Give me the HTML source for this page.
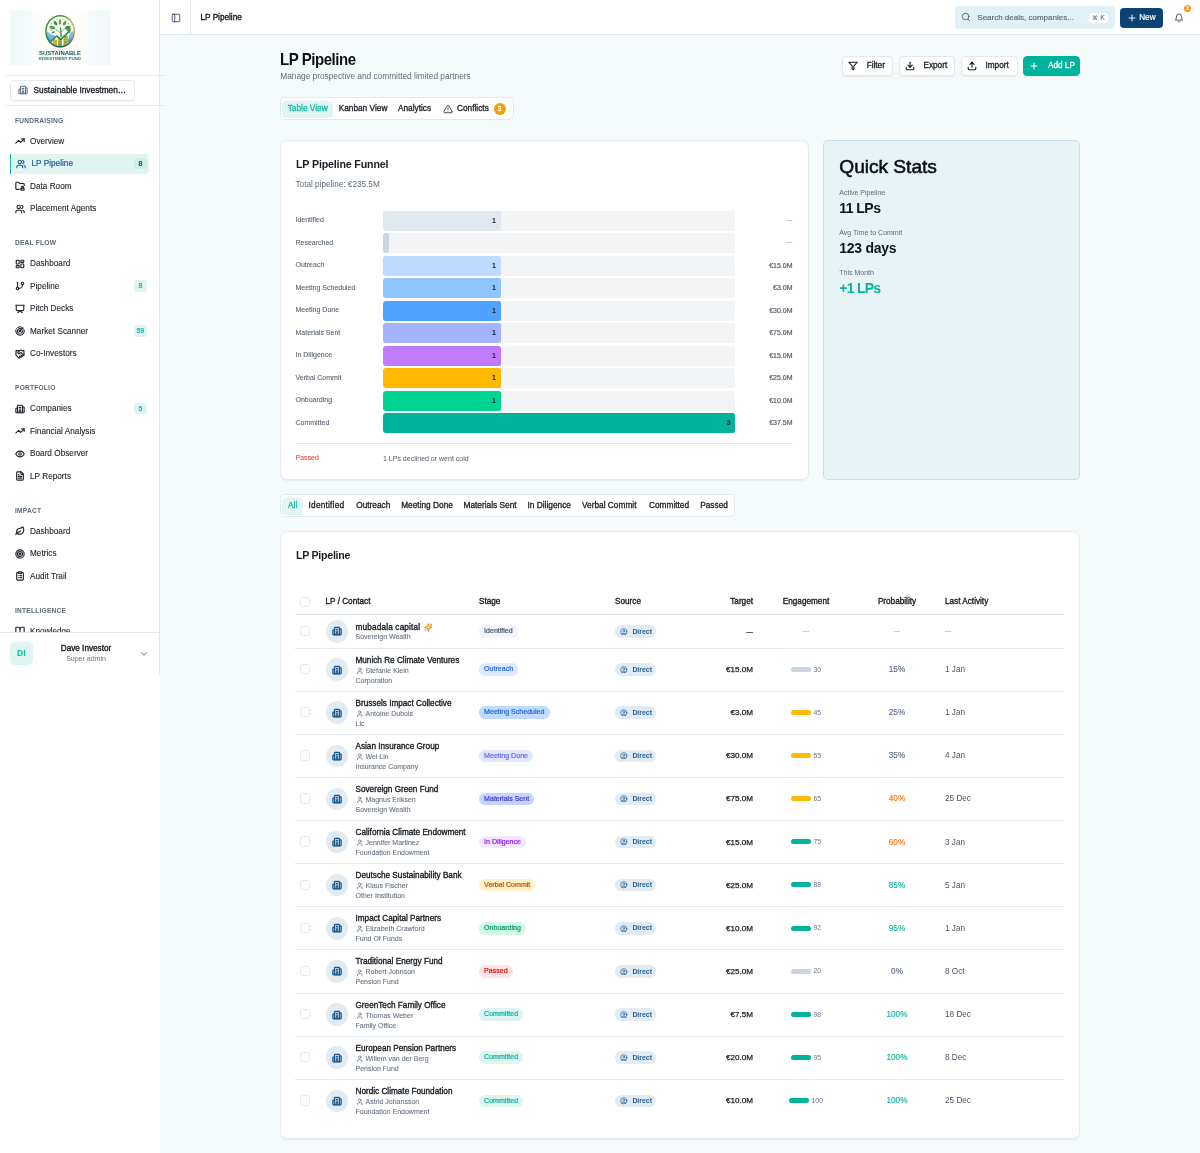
<!DOCTYPE html>
<html lang="en"><head><meta charset="utf-8"><title>LP Pipeline</title>
<style>
*{box-sizing:border-box;margin:0;padding:0}
html,body{width:1200px;height:1153px;overflow:hidden;background:#fff}
body{will-change:transform;font-family:"Liberation Sans",sans-serif;color:#1a1d23;font-size:8.2px;position:relative;-webkit-font-smoothing:antialiased}
.ic{display:inline-block;flex:none}
a{text-decoration:none;color:inherit}
/* sidebar */
.sb{position:absolute;left:0;top:0;width:160px;height:675px;background:#fff;border-right:1px solid #e2e8f0;overflow:hidden}
.logo{position:absolute;left:10px;top:10px}
.sbline{position:absolute;left:5px;width:159.5px;height:1px;background:#e6ebf2;z-index:5}
.org{position:absolute;left:10px;top:80.1px;width:125px;height:20.5px;border:1px solid #e2e8f0;border-radius:4px;background:#fff;display:flex;align-items:center;padding-left:7px;box-shadow:0 1px 1px rgba(0,0,0,.03)}
.org span{margin-left:5.5px;font-size:8.3px;color:#15181d;letter-spacing:.02px;-webkit-text-stroke:.3px #15181d}
.nav{position:absolute;left:0;top:0;width:159px;height:631.7px;overflow:hidden}
.glabel{position:absolute;left:15px;font-size:6.6px;line-height:12px;font-weight:700;letter-spacing:.23px;color:#5d6879}
.item{position:absolute;left:10px;width:139px;height:20px;display:flex;align-items:center;padding-left:5px;border-radius:4px;color:#1f242c}
.item .t{margin-left:5px;font-size:8.2px;letter-spacing:.02px;-webkit-text-stroke:.12px currentColor}
.item.act{background:#e0f5f2;border-left:1.5px solid #14b8a6;padding-left:5px;color:#1e5f96;border-radius:0 4px 4px 0}
.item.act .t{margin-left:5.5px;-webkit-text-stroke:.2px #1e5f96}
.nb{position:absolute;right:2.4px;top:4px;width:12.5px;height:11.8px;border-radius:3px;background:#e0f5f2;color:#14b8a6;font-size:7px;line-height:12px;text-align:center;font-weight:400;-webkit-text-stroke:.25px currentColor}
.nb.nba{background:#cdeee9;color:#334155}
.sbfoot{position:absolute;left:0;top:631.7px;width:159px;height:43.3px;border-top:1px solid #e2e8f0;background:#fff}
.av{position:absolute;left:10px;top:9.5px;width:22.5px;height:22.5px;border-radius:5px;background:#dff5f2;color:#14b8a6;font-size:8.6px;font-weight:700;line-height:22.5px;text-align:center}
.un{position:absolute;left:40px;width:92px;top:10.5px;text-align:center;font-size:8.2px;line-height:11px;color:#15181d;-webkit-text-stroke:.35px #15181d}
.ur{position:absolute;left:40px;width:92px;top:21.8px;text-align:center;font-size:7px;line-height:10px;color:#64748b}
/* header */
.hd{position:absolute;left:160px;top:0;width:1040px;height:35px;background:#fff;border-bottom:1px solid #e2e8f0}
.hsep{position:absolute;left:30px;top:0;width:1px;height:34px;background:#e2e8f0}
.htitle{position:absolute;left:40.5px;top:12px;font-size:8.2px;line-height:12px;color:#15181d;-webkit-text-stroke:.35px #15181d}
.search{position:absolute;left:795px;top:6px;width:160px;height:22.5px;border-radius:4px;background:#e0f0f6}
.search .ph{position:absolute;left:22.3px;top:5.8px;font-size:8px;line-height:12px;color:#566474;-webkit-text-stroke:.12px #566474}
.kbd{position:absolute;left:134px;top:6.6px;width:19px;height:10px;border-radius:2.5px;background:#fff;font-size:7px;line-height:10px;text-align:center;color:#475569}
.newbtn{position:absolute;left:960px;top:7.7px;width:42.500px;height:20px;border-radius:4px;background:#0b4375;color:#fff}
.newbtn span{position:absolute;left:19.2px;top:4.4px;font-size:8.2px;line-height:12px;-webkit-text-stroke:.2px #fff}
.bellb{position:absolute;left:1024px;top:5.200px;width:7px;height:7px;border-radius:50%;background:#f59e0b;color:#fff;font-size:5px;line-height:7px;text-align:center;font-weight:700}
/* main */
.main{position:absolute;left:160px;top:35px;width:1040px;height:1118px;background:#f5fbfb}
.ptitle{position:absolute;left:120px;top:16px;font-size:15px;line-height:18px;font-weight:700;letter-spacing:-.45px;color:#0c0f13;transform:scaleY(1.1);transform-origin:0 14.3px}
.psub{position:absolute;left:120.300px;top:36px;font-size:8.3px;line-height:11px;color:#5f6b7a}
.btn{position:absolute;top:21px;height:20px;border-radius:4px;background:#fff;border:1px solid #e2e8f0;box-shadow:0 1px 1.5px rgba(0,0,0,.05);color:#1a1d23}
.btn .ic{position:absolute;left:5.3px;top:4.2px}
.btn span{position:absolute;left:24px;top:3.2px;font-size:8.2px;line-height:12px;-webkit-text-stroke:.3px currentColor}
.btn.prim{background:#00b39b;border-color:#00b39b;color:#fff}
.tabs{position:absolute;height:23px;border:1px solid #e2e8f0;border-radius:5px;background:#fff}
.tab{position:absolute;top:2.5px;height:17px;border-radius:3.5px;font-size:8.3px;line-height:15.8px;text-align:center;color:#1a1d23;white-space:nowrap;-webkit-text-stroke:.3px currentColor}
.tab.on{background:#e0f5f2;color:#14b8a6}
.cb{position:absolute;left:56.5px;top:2.2px;width:12px;height:12px;border-radius:50%;background:#f59e0b;color:#fff;font-size:6.5px;line-height:12px;text-align:center}
.card{position:absolute;background:#fff;border:1px solid #e5eaf0;border-radius:7.5px;box-shadow:0 1px 2px rgba(15,23,42,.06)}
.ctitle{position:absolute;left:15px;top:15.3px;font-size:10.7px;line-height:16px;color:#1a1d23;font-weight:700;letter-spacing:-.17px}
.csub{position:absolute;left:14.5px;top:37.5px;font-size:8.2px;line-height:12px;color:#5f6b7a}
.frow{position:absolute;left:14.5px;width:497px;height:20px}
.fl{position:absolute;left:0;top:3.6px;font-size:7px;line-height:11px;color:#566170;white-space:nowrap;-webkit-text-stroke:.08px currentColor}
.ftrack{position:absolute;left:87.5px;top:0;width:352px;height:20px;border-radius:2.5px;background:#f3f4f6;overflow:hidden}
.ffill{position:absolute;left:0;top:0;height:20px;border-radius:2.5px;text-align:right;padding-right:5px;font-size:7px;line-height:20px;font-weight:700;color:#1a1d23}
.fv{position:absolute;right:0;top:3.8px;font-size:7px;line-height:11px;color:#4b5563;-webkit-text-stroke:.15px #4b5563}
.fv.dash{color:#94a3b8;-webkit-text-stroke:0}
.fsep{position:absolute;left:14.5px;width:497px;top:301.8px;height:1px;background:#e2e8f0}
.fpass{position:absolute;left:14.5px;top:307px;width:497px;height:20px}
.fnote{position:absolute;left:87.5px;top:4.5px;font-size:7px;line-height:11px;color:#4f5966}
.fpass .fl{top:4.2px}
.qs{position:absolute;background:#e8f3f6;border:1px solid #cbdfe8;border-radius:5px}
.qtitle{position:absolute;left:15.300px;top:13.6px;font-size:19.2px;line-height:24px;font-weight:400;letter-spacing:-.05px;color:#0c0f13;-webkit-text-stroke:.55px #0c0f13}
.ql{position:absolute;left:15.300px;font-size:7px;line-height:10px;color:#5f6b7a}
.qv{position:absolute;left:15.300px;font-size:14px;line-height:20px;font-weight:700;letter-spacing:-.4px;color:#111418}
.qv.teal{color:#0cb39c}
.thead{position:absolute;left:14px;top:56.3px;width:769px;height:27px;border-bottom:1px solid #e2e8f0}
.th{position:absolute;top:7.9px;font-size:8.2px;line-height:12px;color:#15181d;white-space:nowrap;-webkit-text-stroke:.32px #15181d}
.th.r{text-align:right}.th.c{text-align:center}
.cbx{position:absolute;left:4.8px;width:10.4px;height:10.4px;border:1px solid #e3e9f0;border-radius:2.8px;background:#fff}
.tr{position:absolute;left:14px;width:769px;border-bottom:1px solid #e4e9f1}
.tr:last-child{border-bottom:0}
.lpav{position:absolute;left:30.5px;width:22.5px;height:22.5px;border-radius:50%;background:#e2ebf2;display:flex;align-items:center;justify-content:center}
.nm{position:absolute;left:60.5px;font-size:8.2px;line-height:11px;color:#15181d;white-space:nowrap;-webkit-text-stroke:.32px #15181d}
.ct,.ty{position:absolute;left:60.5px;font-size:7px;line-height:10px;color:#657081;white-space:nowrap;-webkit-text-stroke:.08px currentColor}
.sbadge{position:absolute;left:184px;height:12.5px;border-radius:6.25px;padding:0 5.1px;font-size:7.05px;line-height:12.5px;white-space:nowrap;-webkit-text-stroke:.2px currentColor}
.dbadge{position:absolute;left:320px;width:41px;height:12.5px;border-radius:6.25px;background:#e2ebf2;color:#1e5f96}
.dbadge .ic{position:absolute;left:5px;top:2.5px}
.dbadge span{position:absolute;left:17.4px;top:.4px;font-size:6.900px;line-height:12.5px;font-weight:700}
.tg{position:absolute;left:398px;width:60px;text-align:right;font-size:8.1px;line-height:11px;color:#1a1d23;-webkit-text-stroke:.25px #1a1d23}
.dash{position:absolute;text-align:center;font-size:6.4px;line-height:10px;color:#94a3b8}
.eg{position:absolute;left:466px;width:90px;height:10px;display:flex;align-items:center;justify-content:center}
.eg i{display:block;width:20px;height:5px;border-radius:2.5px;position:relative;top:.6px}
.eg b{font-weight:400;font-size:6.8px;line-height:10px;color:#64748b;margin-left:2.5px;position:relative;top:.8px}
.pb{position:absolute;left:557px;width:90px;text-align:center;font-size:8.2px;line-height:11px;-webkit-text-stroke:.15px currentColor}
.la{position:absolute;left:650px;font-size:8.2px;line-height:11px;color:#4b5563}

</style></head>
<body>
<aside class="sb">
<svg class="logo" width="100" height="55" viewBox="0 0 100 55">
<defs>
<linearGradient id="lgbg" x1="0" x2="1" y1="0" y2="0"><stop offset="0" stop-color="#f3f8fb"/><stop offset="0.2" stop-color="#f4f9fb"/><stop offset="0.235" stop-color="#fdfdfb"/><stop offset="0.765" stop-color="#fdfdfb"/><stop offset="0.8" stop-color="#f4f9fb"/><stop offset="1" stop-color="#f3f8fb"/></linearGradient>
<linearGradient id="lgring" x1="0" x2="1" y1="0.3" y2="0.7"><stop offset="0" stop-color="#2c8a3c"/><stop offset="0.5" stop-color="#5a9c3a"/><stop offset="0.72" stop-color="#c9aa3a"/><stop offset="1" stop-color="#d4ad3c"/></linearGradient>
<linearGradient id="lgring2" x1="0" x2="0" y1="0" y2="1"><stop offset="0.5" stop-color="#1c6a62" stop-opacity="0"/><stop offset="0.95" stop-color="#1c6a62"/></linearGradient>
<linearGradient id="lgblue" x1="0" x2="0" y1="0" y2="1"><stop offset="0" stop-color="#a9d8ee"/><stop offset="1" stop-color="#2f8fd0"/></linearGradient>
<clipPath id="lgclip"><ellipse cx="50.1" cy="21.2" rx="13.700" ry="15"/></clipPath>
</defs>
<rect width="100" height="55" fill="url(#lgbg)"/>
<g clip-path="url(#lgclip)">
<rect x="35" y="5" width="31" height="33" fill="#fcfefc"/>
<path d="M35 18.5 C37 21.5 40 24.5 46.500 26.200 L41.300 31 L36.500 35 L35 35Z" fill="url(#lgblue)"/>
<path d="M65.500 17.500 C64 20 62.500 21.500 60.500 22.500 L59 27 L57.500 31.500 L60 35 L65.500 35Z" fill="url(#lgblue)"/>
<rect x="43" y="29.500" width="4.200" height="6" rx="1" fill="#c9b03a"/><rect x="48" y="28.300" width="4" height="8" rx="0.800" fill="#8c9a36"/><rect x="53.500" y="25.500" width="4.200" height="10" rx="0.800" fill="#a3a038"/>
<rect x="48" y="30.300" width="4" height="0.700" fill="#d8c86a"/><rect x="53.500" y="28" width="4.200" height="0.700" fill="#d8c86a"/><rect x="53.500" y="30.500" width="4.200" height="0.700" fill="#d8c86a"/><rect x="48" y="32.500" width="4" height="0.700" fill="#d8c86a"/>
<path d="M39.500 33 L46.700 26 L50.800 29.400 L59.200 21.300" fill="none" stroke="#2f8a3c" stroke-width="1.500" stroke-linejoin="miter"/>
</g>
<path d="M56.300 19.800 L61.300 18.300 L59.800 23.400Z" fill="#3f9a3c"/>
<path d="M50.300 27.300 C50.500 24 50.300 21 49.800 17.500 L51 17.200 C51.500 20.500 51.800 23.500 51.800 26.800Z" fill="#3f8a3c"/>
<path d="M50.300 23 C49 21.500 47.500 20.500 45.500 19.800" fill="none" stroke="#4a9440" stroke-width="0.700"/>
<path d="M51 22.500 C52 20.500 53.500 19.300 55 18.500" fill="none" stroke="#4a9440" stroke-width="0.700"/>
<ellipse cx="42.300" cy="17.600" rx="3.100" ry="1.700" transform="rotate(18 42.300 17.600)" fill="#5aa845"/>
<ellipse cx="57.800" cy="17.600" rx="3" ry="1.700" transform="rotate(-18 57.800 17.600)" fill="#3a8a4a"/>
<ellipse cx="45.450" cy="13.100" rx="2.700" ry="1.500" transform="rotate(55 45.450 13.100)" fill="#3f8f42"/>
<ellipse cx="54.650" cy="13.100" rx="2.600" ry="1.400" transform="rotate(-55 54.650 13.100)" fill="#55a343"/>
<ellipse cx="50" cy="11.900" rx="1.300" ry="3" fill="#5fae48"/>
<ellipse cx="43.400" cy="22.300" rx="1.700" ry="0.900" transform="rotate(-25 43.400 22.300)" fill="#3f8f42"/>
<circle cx="41.500" cy="13.800" r="0.700" fill="#5fae48"/><circle cx="46.700" cy="9.800" r="0.600" fill="#6ab550"/><circle cx="53" cy="10" r="0.600" fill="#6ab550"/><circle cx="58.200" cy="13.800" r="0.700" fill="#6ab550"/><circle cx="41" cy="20.300" r="0.600" fill="#3f8f42"/>
<ellipse cx="50.100" cy="21.200" rx="14.200" ry="15.500" fill="none" stroke="url(#lgring)" stroke-width="1.400"/>
<ellipse cx="50.100" cy="21.200" rx="14.200" ry="15.500" fill="none" stroke="url(#lgring2)" stroke-width="1.400"/>
<text x="50" y="45" text-anchor="middle" font-family="'Liberation Sans',sans-serif" font-weight="700" font-size="6" textLength="42" lengthAdjust="spacingAndGlyphs" fill="#1b5563">SUSTAINABLE</text>
<text x="50" y="49.600" text-anchor="middle" font-family="'Liberation Sans',sans-serif" font-weight="700" font-size="3.800" textLength="42" lengthAdjust="spacingAndGlyphs" fill="#2d7a5c">INVESTMENT FUND</text>
</svg>
<div class="org"><svg class="ic" width="10" height="10" viewBox="0 0 24 24" fill="none" stroke="#64748b" stroke-width="2.7" stroke-linecap="round" stroke-linejoin="round" style=""><path d="M10 12h4"/><path d="M10 8h4"/><path d="M14 21v-3a2 2 0 0 0-4 0v3"/><path d="M6 10H4a2 2 0 0 0-2 2v7a2 2 0 0 0 2 2h16a2 2 0 0 0 2-2V9a2 2 0 0 0-2-2h-2"/><path d="M6 21V5a2 2 0 0 1 2-2h8a2 2 0 0 1 2 2v16"/></svg><span>Sustainable Investmen…</span></div><nav class="nav"><div class="glabel" style="top:114.70px">FUNDRAISING</div>
<a class="item" style="top:131.10px"><svg class="ic" width="10" height="10" viewBox="0 0 24 24" fill="none" stroke="currentColor" stroke-width="2.7" stroke-linecap="round" stroke-linejoin="round" style=""><polyline points="22 7 13.5 15.5 8.5 10.5 2 17"/><polyline points="16 7 22 7 22 13"/></svg><span class="t">Overview</span></a>
<a class="item act" style="top:153.60px"><svg class="ic" width="10" height="10" viewBox="0 0 24 24" fill="none" stroke="currentColor" stroke-width="2.7" stroke-linecap="round" stroke-linejoin="round" style=""><path d="M16 21v-2a4 4 0 0 0-4-4H6a4 4 0 0 0-4 4v2"/><circle cx="9" cy="7" r="4"/><path d="M22 21v-2a4 4 0 0 0-3-3.87"/><path d="M16 3.13a4 4 0 0 1 0 7.75"/></svg><span class="t">LP Pipeline</span><span class="nb nba">8</span></a>
<a class="item" style="top:176.10px"><svg class="ic" width="10" height="10" viewBox="0 0 24 24" fill="none" stroke="currentColor" stroke-width="2.7" stroke-linecap="round" stroke-linejoin="round" style=""><rect width="8" height="5" x="14" y="17" rx="1"/><path d="M10 20H4a2 2 0 0 1-2-2V5a2 2 0 0 1 2-2h3.9a2 2 0 0 1 1.69.9l.81 1.2a2 2 0 0 0 1.67.9H20a2 2 0 0 1 2 2v2.5"/><path d="M20 17v-2a2 2 0 1 0-4 0v2"/></svg><span class="t">Data Room</span></a>
<a class="item" style="top:198.60px"><svg class="ic" width="10" height="10" viewBox="0 0 24 24" fill="none" stroke="currentColor" stroke-width="2.7" stroke-linecap="round" stroke-linejoin="round" style=""><path d="M16 21v-2a4 4 0 0 0-4-4H6a4 4 0 0 0-4 4v2"/><circle cx="9" cy="7" r="4"/><path d="M22 21v-2a4 4 0 0 0-3-3.87"/><path d="M16 3.13a4 4 0 0 1 0 7.75"/></svg><span class="t">Placement Agents</span></a>
<div class="glabel" style="top:237.30px">DEAL FLOW</div>
<a class="item" style="top:253.70px"><svg class="ic" width="10" height="10" viewBox="0 0 24 24" fill="none" stroke="currentColor" stroke-width="2.7" stroke-linecap="round" stroke-linejoin="round" style=""><rect width="7" height="9" x="3" y="3" rx="1"/><rect width="7" height="5" x="14" y="3" rx="1"/><rect width="7" height="9" x="14" y="12" rx="1"/><rect width="7" height="5" x="3" y="16" rx="1"/></svg><span class="t">Dashboard</span></a>
<a class="item" style="top:276.20px"><svg class="ic" width="10" height="10" viewBox="0 0 24 24" fill="none" stroke="currentColor" stroke-width="2.7" stroke-linecap="round" stroke-linejoin="round" style=""><line x1="6" x2="6" y1="3" y2="15"/><circle cx="18" cy="6" r="3"/><circle cx="6" cy="18" r="3"/><path d="M18 9a9 9 0 0 1-9 9"/></svg><span class="t">Pipeline</span><span class="nb">8</span></a>
<a class="item" style="top:298.70px"><svg class="ic" width="10" height="10" viewBox="0 0 24 24" fill="none" stroke="currentColor" stroke-width="2.7" stroke-linecap="round" stroke-linejoin="round" style=""><path d="M2 3h20"/><path d="M21 3v11a2 2 0 0 1-2 2H5a2 2 0 0 1-2-2V3"/><path d="m7 21 5-5 5 5"/></svg><span class="t">Pitch Decks</span></a>
<a class="item" style="top:321.20px"><svg class="ic" width="10" height="10" viewBox="0 0 24 24" fill="none" stroke="currentColor" stroke-width="2.7" stroke-linecap="round" stroke-linejoin="round" style=""><path d="M19.07 4.93A10 10 0 0 0 6.99 3.34"/><path d="M4 6h.01"/><path d="M2.29 9.62A10 10 0 1 0 21.31 8.35"/><path d="M16.24 7.76A6 6 0 1 0 8.23 16.67"/><path d="M12 18h.01"/><path d="M17.99 11.66A6 6 0 0 1 15.77 16.67"/><circle cx="12" cy="12" r="2"/><path d="m13.41 10.59 5.66-5.66"/></svg><span class="t">Market Scanner</span><span class="nb">59</span></a>
<a class="item" style="top:343.70px"><svg class="ic" width="10" height="10" viewBox="0 0 24 24" fill="none" stroke="currentColor" stroke-width="2.7" stroke-linecap="round" stroke-linejoin="round" style=""><path d="m11 17 2 2a1 1 0 1 0 3-3"/><path d="m14 14 2.5 2.5a1 1 0 1 0 3-3l-3.88-3.88a3 3 0 0 0-4.24 0l-.88.88a1 1 0 1 1-3-3l2.81-2.81a5.79 5.79 0 0 1 7.06-.87l.47.28a2 2 0 0 0 1.42.25L21 4"/><path d="m21 3 1 11h-2"/><path d="M3 3 2 14l6.5 6.5a1 1 0 1 0 3-3"/><path d="M3 4h8"/></svg><span class="t">Co-Investors</span></a>
<div class="glabel" style="top:382.30px">PORTFOLIO</div>
<a class="item" style="top:398.70px"><svg class="ic" width="10" height="10" viewBox="0 0 24 24" fill="none" stroke="currentColor" stroke-width="2.7" stroke-linecap="round" stroke-linejoin="round" style=""><path d="M10 12h4"/><path d="M10 8h4"/><path d="M14 21v-3a2 2 0 0 0-4 0v3"/><path d="M6 10H4a2 2 0 0 0-2 2v7a2 2 0 0 0 2 2h16a2 2 0 0 0 2-2V9a2 2 0 0 0-2-2h-2"/><path d="M6 21V5a2 2 0 0 1 2-2h8a2 2 0 0 1 2 2v16"/></svg><span class="t">Companies</span><span class="nb">5</span></a>
<a class="item" style="top:421.20px"><svg class="ic" width="10" height="10" viewBox="0 0 24 24" fill="none" stroke="currentColor" stroke-width="2.7" stroke-linecap="round" stroke-linejoin="round" style=""><polyline points="22 7 13.5 15.5 8.5 10.5 2 17"/><polyline points="16 7 22 7 22 13"/></svg><span class="t">Financial Analysis</span></a>
<a class="item" style="top:443.70px"><svg class="ic" width="10" height="10" viewBox="0 0 24 24" fill="none" stroke="currentColor" stroke-width="2.7" stroke-linecap="round" stroke-linejoin="round" style=""><path d="M2.062 12.348a1 1 0 0 1 0-.696 10.75 10.75 0 0 1 19.876 0 1 1 0 0 1 0 .696 10.75 10.75 0 0 1-19.876 0"/><circle cx="12" cy="12" r="3"/></svg><span class="t">Board Observer</span></a>
<a class="item" style="top:466.20px"><svg class="ic" width="10" height="10" viewBox="0 0 24 24" fill="none" stroke="currentColor" stroke-width="2.7" stroke-linecap="round" stroke-linejoin="round" style=""><path d="M15 2H6a2 2 0 0 0-2 2v16a2 2 0 0 0 2 2h12a2 2 0 0 0 2-2V7Z"/><path d="M14 2v4a2 2 0 0 0 2 2h4"/><path d="M10 9H8"/><path d="M16 13H8"/><path d="M16 17H8"/></svg><span class="t">LP Reports</span></a>
<div class="glabel" style="top:504.80px">IMPACT</div>
<a class="item" style="top:521.20px"><svg class="ic" width="10" height="10" viewBox="0 0 24 24" fill="none" stroke="currentColor" stroke-width="2.7" stroke-linecap="round" stroke-linejoin="round" style=""><path d="M11 20A7 7 0 0 1 9.8 6.1C15.5 5 17 4.48 19 2c1 2 2 4.18 2 8 0 5.5-4.78 10-10 10Z"/><path d="M2 21c0-3 1.85-5.36 5.08-6C9.5 14.52 12 13 13 12"/></svg><span class="t">Dashboard</span></a>
<a class="item" style="top:543.70px"><svg class="ic" width="10" height="10" viewBox="0 0 24 24" fill="none" stroke="currentColor" stroke-width="2.7" stroke-linecap="round" stroke-linejoin="round" style=""><circle cx="12" cy="12" r="10"/><circle cx="12" cy="12" r="6"/><circle cx="12" cy="12" r="2"/></svg><span class="t">Metrics</span></a>
<a class="item" style="top:566.20px"><svg class="ic" width="10" height="10" viewBox="0 0 24 24" fill="none" stroke="currentColor" stroke-width="2.7" stroke-linecap="round" stroke-linejoin="round" style=""><rect width="8" height="4" x="8" y="2" rx="1" ry="1"/><path d="M16 4h2a2 2 0 0 1 2 2v14a2 2 0 0 1-2 2H6a2 2 0 0 1-2-2V6a2 2 0 0 1 2-2h2"/><path d="M12 11h4"/><path d="M12 16h4"/><path d="M8 11h.01"/><path d="M8 16h.01"/></svg><span class="t">Audit Trail</span></a>
<div class="glabel" style="top:604.80px">INTELLIGENCE</div>
<a class="item" style="top:621.20px"><svg class="ic" width="10" height="10" viewBox="0 0 24 24" fill="none" stroke="currentColor" stroke-width="2.7" stroke-linecap="round" stroke-linejoin="round" style=""><path d="M12 7v14"/><path d="M3 18a1 1 0 0 1-1-1V4a1 1 0 0 1 1-1h5a4 4 0 0 1 4 4 4 4 0 0 1 4-4h5a1 1 0 0 1 1 1v13a1 1 0 0 1-1 1h-6a3 3 0 0 0-3 3 3 3 0 0 0-3-3z"/></svg><span class="t">Knowledge</span></a>
</nav><div class="sbfoot"><div class="av">DI</div><div class="un">Dave Investor</div><div class="ur">Super admin</div><svg class="ic" width="10" height="10" viewBox="0 0 24 24" fill="none" stroke="#475569" stroke-width="2" stroke-linecap="round" stroke-linejoin="round" style="position:absolute;left:139px;top:16px"><path d="m6 9 6 6 6-6"/></svg></div></aside>
<div class="sbline" style="top:75px"></div><div class="sbline" style="top:105.3px"></div>
<header class="hd"><svg class="ic" width="10" height="10" viewBox="0 0 24 24" fill="none" stroke="#475569" stroke-width="2.3" stroke-linecap="round" stroke-linejoin="round" style="position:absolute;left:11px;top:12.8px"><rect width="18" height="18" x="3" y="3" rx="2"/><path d="M9 3v18"/></svg><div class="hsep"></div><div class="htitle">LP Pipeline</div><div class="search"><svg class="ic" width="10" height="10" viewBox="0 0 24 24" fill="none" stroke="#475569" stroke-width="2" stroke-linecap="round" stroke-linejoin="round" style="position:absolute;left:6px;top:6.4px"><circle cx="11" cy="11" r="8"/><path d="m21 21-4.3-4.3"/></svg><span class="ph">Search deals, companies...</span><span class="kbd"><span style="font-size:6px">⌘</span> K</span></div><div class="newbtn"><svg class="ic" width="10" height="10" viewBox="0 0 24 24" fill="none" stroke="#fff" stroke-width="2.3" stroke-linecap="round" stroke-linejoin="round" style="position:absolute;left:6.5px;top:5.3px"><path d="M5 12h14"/><path d="M12 5v14"/></svg><span>New</span></div><svg class="ic" width="10" height="10" viewBox="0 0 24 24" fill="none" stroke="#334155" stroke-width="2" stroke-linecap="round" stroke-linejoin="round" style="position:absolute;left:1014px;top:12.5px"><path d="M6 8a6 6 0 0 1 12 0c0 7 3 9 3 9H3s3-2 3-9"/><path d="M10.3 21a1.94 1.94 0 0 0 3.4 0"/></svg><div class="bellb">3</div></header>
<main class="main"><h1 class="ptitle">LP Pipeline</h1><p class="psub">Manage prospective and committed limited partners</p><div class="btn" style="left:681.7px;width:51px"><svg class="ic" width="10" height="10" viewBox="0 0 24 24" fill="none" stroke="currentColor" stroke-width="2.7" stroke-linecap="round" stroke-linejoin="round" style=""><polygon points="22 3 2 3 10 12.46 10 19 14 21 14 12.46 22 3"/></svg><span>Filter</span></div><div class="btn" style="left:738.5px;width:56.2px"><svg class="ic" width="10" height="10" viewBox="0 0 24 24" fill="none" stroke="currentColor" stroke-width="2.7" stroke-linecap="round" stroke-linejoin="round" style=""><path d="M21 15v4a2 2 0 0 1-2 2H5a2 2 0 0 1-2-2v-4"/><polyline points="7 10 12 15 17 10"/><line x1="12" x2="12" y1="15" y2="3"/></svg><span>Export</span></div><div class="btn" style="left:800.5px;width:57.2px"><svg class="ic" width="10" height="10" viewBox="0 0 24 24" fill="none" stroke="currentColor" stroke-width="2.7" stroke-linecap="round" stroke-linejoin="round" style=""><path d="M21 15v4a2 2 0 0 1-2 2H5a2 2 0 0 1-2-2v-4"/><polyline points="17 8 12 3 7 8"/><line x1="12" x2="12" y1="3" y2="15"/></svg><span>Import</span></div><div class="btn prim" style="left:863px;width:57px"><svg class="ic" width="10" height="10" viewBox="0 0 24 24" fill="none" stroke="currentColor" stroke-width="2.7" stroke-linecap="round" stroke-linejoin="round" style=""><path d="M5 12h14"/><path d="M12 5v14"/></svg><span>Add LP</span></div><div class="tabs" style="left:120px;top:62px;width:233.5px"><span class="tab on" style="left:1px;width:51.4px">Table View</span><span class="tab" style="left:53px;width:58px">Kanban View</span><span class="tab" style="left:111px;width:45px">Analytics</span><span class="tab" style="left:156px;width:75px;text-align:left"><svg class="ic" width="10" height="10" viewBox="0 0 24 24" fill="none" stroke="#1e293b" stroke-width="2" stroke-linecap="round" stroke-linejoin="round" style="position:absolute;left:5.7px;top:3.6px"><path d="m21.73 18-8-14a2 2 0 0 0-3.48 0l-8 14A2 2 0 0 0 4 21h16a2 2 0 0 0 1.73-3"/><path d="M12 9v4"/><path d="M12 17h.01"/></svg><span style="position:absolute;left:20px">Conflicts</span><span class="cb">3</span></span></div><section class="card" style="left:120px;top:105px;width:528.5px;height:339.6px"><div class="ctitle">LP Pipeline Funnel</div><div class="csub">Total pipeline: €235.5M</div><div class="frow" style="top:69.8px"><span class="fl">Identified</span><span class="ftrack"><span class="ffill" style="width:117.9px;background:#e2e8f0">1</span></span><span class="fv dash">—</span></div>
<div class="frow" style="top:92.3px"><span class="fl">Researched</span><span class="ftrack"><span class="ffill" style="width:5.6px;background:#cad5e2"></span></span><span class="fv dash">—</span></div>
<div class="frow" style="top:114.8px"><span class="fl">Outreach</span><span class="ftrack"><span class="ffill" style="width:117.9px;background:#bedbff">1</span></span><span class="fv">€15.0M</span></div>
<div class="frow" style="top:137.3px"><span class="fl">Meeting Scheduled</span><span class="ftrack"><span class="ffill" style="width:117.9px;background:#8ec5ff">1</span></span><span class="fv">€3.0M</span></div>
<div class="frow" style="top:159.8px"><span class="fl">Meeting Done</span><span class="ftrack"><span class="ffill" style="width:117.9px;background:#51a2ff">1</span></span><span class="fv">€30.0M</span></div>
<div class="frow" style="top:182.3px"><span class="fl">Materials Sent</span><span class="ftrack"><span class="ffill" style="width:117.9px;background:#a3b3ff">1</span></span><span class="fv">€75.0M</span></div>
<div class="frow" style="top:204.8px"><span class="fl">In Diligence</span><span class="ftrack"><span class="ffill" style="width:117.9px;background:#c27aff">1</span></span><span class="fv">€15.0M</span></div>
<div class="frow" style="top:227.3px"><span class="fl">Verbal Commit</span><span class="ftrack"><span class="ffill" style="width:117.9px;background:#ffb900">1</span></span><span class="fv">€25.0M</span></div>
<div class="frow" style="top:249.8px"><span class="fl">Onboarding</span><span class="ftrack"><span class="ffill" style="width:117.9px;background:#00d492">1</span></span><span class="fv">€10.0M</span></div>
<div class="frow" style="top:272.3px"><span class="fl">Committed</span><span class="ftrack"><span class="ffill" style="width:352.6px;background:#00b39b">3</span></span><span class="fv">€37.5M</span></div>
<div class="fsep"></div><div class="fpass"><span class="fl" style="color:#ef4444">Passed</span><span class="fnote">1 LPs declined or went cold</span></div></section><section class="qs" style="left:663px;top:105px;width:257px;height:339.6px"><div class="qtitle">Quick Stats</div><div class="ql" style="top:47px">Active Pipeline</div><div class="qv" style="top:57px;letter-spacing:-0.55px">11 LPs</div><div class="ql" style="top:87px">Avg Time to Commit</div><div class="qv" style="top:97px;letter-spacing:-0.28px">123 days</div><div class="ql" style="top:127px">This Month</div><div class="qv teal" style="top:137px;letter-spacing:-0.74px">+1 LPs</div></section><div class="tabs" style="left:120px;top:459px;width:455px"><span class="tab on" style="left:1.1px;width:21.1px">All</span><span class="tab" style="left:21.9px;width:47.1px;letter-spacing:.21px">Identified</span><span class="tab" style="left:69.5px;width:45.5px">Outreach</span><span class="tab" style="left:115.1px;width:61.9px">Meeting Done</span><span class="tab" style="left:177.1px;width:63.9px">Materials Sent</span><span class="tab" style="left:241.1px;width:54.3px">In Diligence</span><span class="tab" style="left:295.1px;width:66.3px">Verbal Commit</span><span class="tab" style="left:361.5px;width:53.1px">Committed</span><span class="tab" style="left:414.3px;width:37.5px">Passed</span></div><section class="card" style="left:120px;top:496.2px;width:800px;height:607.6px"><div class="ctitle" style="letter-spacing:-.3px;top:14.8px">LP Pipeline</div><div class="thead"><span class="cbx" style="top:8.2px"></span><span class="th" style="left:30.5px">LP / Contact</span><span class="th" style="left:184px">Stage</span><span class="th" style="left:320px">Source</span><span class="th r" style="left:398px;width:60px">Target</span><span class="th c" style="left:466px;width:90px">Engagement</span><span class="th c" style="left:557px;width:90px">Probability</span><span class="th" style="left:650px">Last Activity</span></div><div class="tr" style="top:83.200px;height:33.125px"><span class="cbx" style="top:10.46px"></span><span class="lpav" style="top:4.81px"><svg class="ic" width="10" height="10" viewBox="0 0 24 24" fill="none" stroke="#17568f" stroke-width="3" stroke-linecap="round" stroke-linejoin="round" style=""><path d="M10 12h4"/><path d="M10 8h4"/><path d="M14 21v-3a2 2 0 0 0-4 0v3"/><path d="M6 10H4a2 2 0 0 0-2 2v7a2 2 0 0 0 2 2h16a2 2 0 0 0 2-2V9a2 2 0 0 0-2-2h-2"/><path d="M6 21V5a2 2 0 0 1 2-2h8a2 2 0 0 1 2 2v16"/></svg></span><span class="nm" style="top:6.46px;letter-spacing:.18px">mubadala capital<svg class="ic" width="8.75" height="8.75" viewBox="0 0 24 24" fill="none" stroke="#f8981d" stroke-width="3" stroke-linecap="round" stroke-linejoin="round" style="margin-left:3.4px;vertical-align:-1.9px"><path d="M9.937 15.5A2 2 0 0 0 8.5 14.063l-6.135-1.582a.5.5 0 0 1 0-.962L8.5 9.936A2 2 0 0 0 9.937 8.5l1.582-6.135a.5.5 0 0 1 .963 0L14.063 8.5A2 2 0 0 0 15.5 9.937l6.135 1.581a.5.5 0 0 1 0 .964L15.5 14.063a2 2 0 0 0-1.437 1.437l-1.582 6.135a.5.5 0 0 1-.963 0z"/><path d="M20 3v4"/><path d="M22 5h-4"/><path d="M4 17v2"/><path d="M5 18H3"/></svg></span><span class="ty" style="top:17.06px">Sovereign Wealth</span><span class="sbadge" style="top:9.81px;background:#f1f5f9;color:#45556c">Identified</span><span class="dbadge" style="top:9.81px"><svg class="ic" width="7.5" height="7.5" viewBox="0 0 24 24" fill="none" stroke="#1e5f96" stroke-width="2.2" stroke-linecap="round" stroke-linejoin="round" style=""><circle cx="12" cy="12" r="10"/><circle cx="12" cy="10" r="3"/><path d="M7 20.662V19a2 2 0 0 1 2-2h6a2 2 0 0 1 2 2v1.662"/></svg><span>Direct</span></span><span class="tg" style="top:10.56px;font-size:6.4px;color:#374151">—</span><span class="dash" style="left:466px;width:90px;top:11.06px">—</span><span class="dash" style="left:557px;width:90px;top:11.06px">—</span><span class="dash" style="left:650px;text-align:left;top:11.06px">—</span></div>
<div class="tr" style="top:116.325px;height:43.125px"><span class="cbx" style="top:15.46px"></span><span class="lpav" style="top:9.81px"><svg class="ic" width="10" height="10" viewBox="0 0 24 24" fill="none" stroke="#17568f" stroke-width="3" stroke-linecap="round" stroke-linejoin="round" style=""><path d="M10 12h4"/><path d="M10 8h4"/><path d="M14 21v-3a2 2 0 0 0-4 0v3"/><path d="M6 10H4a2 2 0 0 0-2 2v7a2 2 0 0 0 2 2h16a2 2 0 0 0 2-2V9a2 2 0 0 0-2-2h-2"/><path d="M6 21V5a2 2 0 0 1 2-2h8a2 2 0 0 1 2 2v16"/></svg></span><span class="nm" style="top:6.06px">Munich Re Climate Ventures</span><span class="ct" style="top:17.06px"><svg class="ic" width="7.5" height="7.5" viewBox="0 0 24 24" fill="none" stroke="#64748b" stroke-width="2.4" stroke-linecap="round" stroke-linejoin="round" style="vertical-align:-1.6px;margin-right:2.5px"><path d="M19 21v-2a4 4 0 0 0-4-4H9a4 4 0 0 0-4 4v2"/><circle cx="12" cy="7" r="4"/></svg>Stefanie Klein</span><span class="ty" style="top:27.06px">Corporation</span><span class="sbadge" style="top:14.81px;background:#dbeafe;color:#2563eb">Outreach</span><span class="dbadge" style="top:14.81px"><svg class="ic" width="7.5" height="7.5" viewBox="0 0 24 24" fill="none" stroke="#1e5f96" stroke-width="2.2" stroke-linecap="round" stroke-linejoin="round" style=""><circle cx="12" cy="12" r="10"/><circle cx="12" cy="10" r="3"/><path d="M7 20.662V19a2 2 0 0 1 2-2h6a2 2 0 0 1 2 2v1.662"/></svg><span>Direct</span></span><span class="tg" style="top:15.56px">€15.0M</span><span class="eg" style="top:15.26px"><i style="background:#cad5e2"></i><b>30</b></span><span class="pb" style="top:15.56px;color:#5d6e8c">15%</span><span class="la" style="top:15.56px">1 Jan</span></div>
<div class="tr" style="top:159.450px;height:43.125px"><span class="cbx" style="top:15.46px"></span><span class="lpav" style="top:9.81px"><svg class="ic" width="10" height="10" viewBox="0 0 24 24" fill="none" stroke="#17568f" stroke-width="3" stroke-linecap="round" stroke-linejoin="round" style=""><path d="M10 12h4"/><path d="M10 8h4"/><path d="M14 21v-3a2 2 0 0 0-4 0v3"/><path d="M6 10H4a2 2 0 0 0-2 2v7a2 2 0 0 0 2 2h16a2 2 0 0 0 2-2V9a2 2 0 0 0-2-2h-2"/><path d="M6 21V5a2 2 0 0 1 2-2h8a2 2 0 0 1 2 2v16"/></svg></span><span class="nm" style="top:6.06px">Brussels Impact Collective</span><span class="ct" style="top:17.06px"><svg class="ic" width="7.5" height="7.5" viewBox="0 0 24 24" fill="none" stroke="#64748b" stroke-width="2.4" stroke-linecap="round" stroke-linejoin="round" style="vertical-align:-1.6px;margin-right:2.5px"><path d="M19 21v-2a4 4 0 0 0-4-4H9a4 4 0 0 0-4 4v2"/><circle cx="12" cy="7" r="4"/></svg>Antoine Dubois</span><span class="ty" style="top:27.06px">Llc</span><span class="sbadge" style="top:14.81px;background:#bfdbfe;color:#2260e8">Meeting Scheduled</span><span class="dbadge" style="top:14.81px"><svg class="ic" width="7.5" height="7.5" viewBox="0 0 24 24" fill="none" stroke="#1e5f96" stroke-width="2.2" stroke-linecap="round" stroke-linejoin="round" style=""><circle cx="12" cy="12" r="10"/><circle cx="12" cy="10" r="3"/><path d="M7 20.662V19a2 2 0 0 1 2-2h6a2 2 0 0 1 2 2v1.662"/></svg><span>Direct</span></span><span class="tg" style="top:15.56px">€3.0M</span><span class="eg" style="top:15.26px"><i style="background:#ffb900"></i><b>45</b></span><span class="pb" style="top:15.56px;color:#5d6e8c">25%</span><span class="la" style="top:15.56px">1 Jan</span></div>
<div class="tr" style="top:202.575px;height:43.125px"><span class="cbx" style="top:15.46px"></span><span class="lpav" style="top:9.81px"><svg class="ic" width="10" height="10" viewBox="0 0 24 24" fill="none" stroke="#17568f" stroke-width="3" stroke-linecap="round" stroke-linejoin="round" style=""><path d="M10 12h4"/><path d="M10 8h4"/><path d="M14 21v-3a2 2 0 0 0-4 0v3"/><path d="M6 10H4a2 2 0 0 0-2 2v7a2 2 0 0 0 2 2h16a2 2 0 0 0 2-2V9a2 2 0 0 0-2-2h-2"/><path d="M6 21V5a2 2 0 0 1 2-2h8a2 2 0 0 1 2 2v16"/></svg></span><span class="nm" style="top:6.06px">Asian Insurance Group</span><span class="ct" style="top:17.06px"><svg class="ic" width="7.5" height="7.5" viewBox="0 0 24 24" fill="none" stroke="#64748b" stroke-width="2.4" stroke-linecap="round" stroke-linejoin="round" style="vertical-align:-1.6px;margin-right:2.5px"><path d="M19 21v-2a4 4 0 0 0-4-4H9a4 4 0 0 0-4 4v2"/><circle cx="12" cy="7" r="4"/></svg>Wei Lin</span><span class="ty" style="top:27.06px">Insurance Company</span><span class="sbadge" style="top:14.81px;background:#e0e7ff;color:#6366f1">Meeting Done</span><span class="dbadge" style="top:14.81px"><svg class="ic" width="7.5" height="7.5" viewBox="0 0 24 24" fill="none" stroke="#1e5f96" stroke-width="2.2" stroke-linecap="round" stroke-linejoin="round" style=""><circle cx="12" cy="12" r="10"/><circle cx="12" cy="10" r="3"/><path d="M7 20.662V19a2 2 0 0 1 2-2h6a2 2 0 0 1 2 2v1.662"/></svg><span>Direct</span></span><span class="tg" style="top:15.56px">€30.0M</span><span class="eg" style="top:15.26px"><i style="background:#ffb900"></i><b>55</b></span><span class="pb" style="top:15.56px;color:#5d6e8c">35%</span><span class="la" style="top:15.56px">4 Jan</span></div>
<div class="tr" style="top:245.700px;height:43.125px"><span class="cbx" style="top:15.46px"></span><span class="lpav" style="top:9.81px"><svg class="ic" width="10" height="10" viewBox="0 0 24 24" fill="none" stroke="#17568f" stroke-width="3" stroke-linecap="round" stroke-linejoin="round" style=""><path d="M10 12h4"/><path d="M10 8h4"/><path d="M14 21v-3a2 2 0 0 0-4 0v3"/><path d="M6 10H4a2 2 0 0 0-2 2v7a2 2 0 0 0 2 2h16a2 2 0 0 0 2-2V9a2 2 0 0 0-2-2h-2"/><path d="M6 21V5a2 2 0 0 1 2-2h8a2 2 0 0 1 2 2v16"/></svg></span><span class="nm" style="top:6.06px">Sovereign Green Fund</span><span class="ct" style="top:17.06px"><svg class="ic" width="7.5" height="7.5" viewBox="0 0 24 24" fill="none" stroke="#64748b" stroke-width="2.4" stroke-linecap="round" stroke-linejoin="round" style="vertical-align:-1.6px;margin-right:2.5px"><path d="M19 21v-2a4 4 0 0 0-4-4H9a4 4 0 0 0-4 4v2"/><circle cx="12" cy="7" r="4"/></svg>Magnus Eriksen</span><span class="ty" style="top:27.06px">Sovereign Wealth</span><span class="sbadge" style="top:14.81px;background:#c7d2fe;color:#4338ca">Materials Sent</span><span class="dbadge" style="top:14.81px"><svg class="ic" width="7.5" height="7.5" viewBox="0 0 24 24" fill="none" stroke="#1e5f96" stroke-width="2.2" stroke-linecap="round" stroke-linejoin="round" style=""><circle cx="12" cy="12" r="10"/><circle cx="12" cy="10" r="3"/><path d="M7 20.662V19a2 2 0 0 1 2-2h6a2 2 0 0 1 2 2v1.662"/></svg><span>Direct</span></span><span class="tg" style="top:15.56px">€75.0M</span><span class="eg" style="top:15.26px"><i style="background:#ffb900"></i><b>65</b></span><span class="pb" style="top:15.56px;color:#f97316">40%</span><span class="la" style="top:15.56px">25 Dec</span></div>
<div class="tr" style="top:288.825px;height:43.125px"><span class="cbx" style="top:15.46px"></span><span class="lpav" style="top:9.81px"><svg class="ic" width="10" height="10" viewBox="0 0 24 24" fill="none" stroke="#17568f" stroke-width="3" stroke-linecap="round" stroke-linejoin="round" style=""><path d="M10 12h4"/><path d="M10 8h4"/><path d="M14 21v-3a2 2 0 0 0-4 0v3"/><path d="M6 10H4a2 2 0 0 0-2 2v7a2 2 0 0 0 2 2h16a2 2 0 0 0 2-2V9a2 2 0 0 0-2-2h-2"/><path d="M6 21V5a2 2 0 0 1 2-2h8a2 2 0 0 1 2 2v16"/></svg></span><span class="nm" style="top:6.06px">California Climate Endowment</span><span class="ct" style="top:17.06px"><svg class="ic" width="7.5" height="7.5" viewBox="0 0 24 24" fill="none" stroke="#64748b" stroke-width="2.4" stroke-linecap="round" stroke-linejoin="round" style="vertical-align:-1.6px;margin-right:2.5px"><path d="M19 21v-2a4 4 0 0 0-4-4H9a4 4 0 0 0-4 4v2"/><circle cx="12" cy="7" r="4"/></svg>Jennifer Martinez</span><span class="ty" style="top:27.06px">Foundation Endowment</span><span class="sbadge" style="top:14.81px;background:#f3e8ff;color:#9810fa">In Diligence</span><span class="dbadge" style="top:14.81px"><svg class="ic" width="7.5" height="7.5" viewBox="0 0 24 24" fill="none" stroke="#1e5f96" stroke-width="2.2" stroke-linecap="round" stroke-linejoin="round" style=""><circle cx="12" cy="12" r="10"/><circle cx="12" cy="10" r="3"/><path d="M7 20.662V19a2 2 0 0 1 2-2h6a2 2 0 0 1 2 2v1.662"/></svg><span>Direct</span></span><span class="tg" style="top:15.56px">€15.0M</span><span class="eg" style="top:15.26px"><i style="background:#00b39b"></i><b>75</b></span><span class="pb" style="top:15.56px;color:#f97316">60%</span><span class="la" style="top:15.56px">3 Jan</span></div>
<div class="tr" style="top:331.950px;height:43.125px"><span class="cbx" style="top:15.46px"></span><span class="lpav" style="top:9.81px"><svg class="ic" width="10" height="10" viewBox="0 0 24 24" fill="none" stroke="#17568f" stroke-width="3" stroke-linecap="round" stroke-linejoin="round" style=""><path d="M10 12h4"/><path d="M10 8h4"/><path d="M14 21v-3a2 2 0 0 0-4 0v3"/><path d="M6 10H4a2 2 0 0 0-2 2v7a2 2 0 0 0 2 2h16a2 2 0 0 0 2-2V9a2 2 0 0 0-2-2h-2"/><path d="M6 21V5a2 2 0 0 1 2-2h8a2 2 0 0 1 2 2v16"/></svg></span><span class="nm" style="top:6.06px">Deutsche Sustainability Bank</span><span class="ct" style="top:17.06px"><svg class="ic" width="7.5" height="7.5" viewBox="0 0 24 24" fill="none" stroke="#64748b" stroke-width="2.4" stroke-linecap="round" stroke-linejoin="round" style="vertical-align:-1.6px;margin-right:2.5px"><path d="M19 21v-2a4 4 0 0 0-4-4H9a4 4 0 0 0-4 4v2"/><circle cx="12" cy="7" r="4"/></svg>Klaus Fischer</span><span class="ty" style="top:27.06px">Other Institution</span><span class="sbadge" style="top:14.81px;background:#fef3c6;color:#bb4d00">Verbal Commit</span><span class="dbadge" style="top:14.81px"><svg class="ic" width="7.5" height="7.5" viewBox="0 0 24 24" fill="none" stroke="#1e5f96" stroke-width="2.2" stroke-linecap="round" stroke-linejoin="round" style=""><circle cx="12" cy="12" r="10"/><circle cx="12" cy="10" r="3"/><path d="M7 20.662V19a2 2 0 0 1 2-2h6a2 2 0 0 1 2 2v1.662"/></svg><span>Direct</span></span><span class="tg" style="top:15.56px">€25.0M</span><span class="eg" style="top:15.26px"><i style="background:#00b39b"></i><b>88</b></span><span class="pb" style="top:15.56px;color:#0fb5a0">85%</span><span class="la" style="top:15.56px">5 Jan</span></div>
<div class="tr" style="top:375.075px;height:43.125px"><span class="cbx" style="top:15.46px"></span><span class="lpav" style="top:9.81px"><svg class="ic" width="10" height="10" viewBox="0 0 24 24" fill="none" stroke="#17568f" stroke-width="3" stroke-linecap="round" stroke-linejoin="round" style=""><path d="M10 12h4"/><path d="M10 8h4"/><path d="M14 21v-3a2 2 0 0 0-4 0v3"/><path d="M6 10H4a2 2 0 0 0-2 2v7a2 2 0 0 0 2 2h16a2 2 0 0 0 2-2V9a2 2 0 0 0-2-2h-2"/><path d="M6 21V5a2 2 0 0 1 2-2h8a2 2 0 0 1 2 2v16"/></svg></span><span class="nm" style="top:6.06px">Impact Capital Partners</span><span class="ct" style="top:17.06px"><svg class="ic" width="7.5" height="7.5" viewBox="0 0 24 24" fill="none" stroke="#64748b" stroke-width="2.4" stroke-linecap="round" stroke-linejoin="round" style="vertical-align:-1.6px;margin-right:2.5px"><path d="M19 21v-2a4 4 0 0 0-4-4H9a4 4 0 0 0-4 4v2"/><circle cx="12" cy="7" r="4"/></svg>Elizabeth Crawford</span><span class="ty" style="top:27.06px">Fund Of Funds</span><span class="sbadge" style="top:14.81px;background:#d0fae5;color:#009966">Onboarding</span><span class="dbadge" style="top:14.81px"><svg class="ic" width="7.5" height="7.5" viewBox="0 0 24 24" fill="none" stroke="#1e5f96" stroke-width="2.2" stroke-linecap="round" stroke-linejoin="round" style=""><circle cx="12" cy="12" r="10"/><circle cx="12" cy="10" r="3"/><path d="M7 20.662V19a2 2 0 0 1 2-2h6a2 2 0 0 1 2 2v1.662"/></svg><span>Direct</span></span><span class="tg" style="top:15.56px">€10.0M</span><span class="eg" style="top:15.26px"><i style="background:#00b39b"></i><b>92</b></span><span class="pb" style="top:15.56px;color:#0fb5a0">95%</span><span class="la" style="top:15.56px">1 Jan</span></div>
<div class="tr" style="top:418.200px;height:43.125px"><span class="cbx" style="top:15.46px"></span><span class="lpav" style="top:9.81px"><svg class="ic" width="10" height="10" viewBox="0 0 24 24" fill="none" stroke="#17568f" stroke-width="3" stroke-linecap="round" stroke-linejoin="round" style=""><path d="M10 12h4"/><path d="M10 8h4"/><path d="M14 21v-3a2 2 0 0 0-4 0v3"/><path d="M6 10H4a2 2 0 0 0-2 2v7a2 2 0 0 0 2 2h16a2 2 0 0 0 2-2V9a2 2 0 0 0-2-2h-2"/><path d="M6 21V5a2 2 0 0 1 2-2h8a2 2 0 0 1 2 2v16"/></svg></span><span class="nm" style="top:6.06px">Traditional Energy Fund</span><span class="ct" style="top:17.06px"><svg class="ic" width="7.5" height="7.5" viewBox="0 0 24 24" fill="none" stroke="#64748b" stroke-width="2.4" stroke-linecap="round" stroke-linejoin="round" style="vertical-align:-1.6px;margin-right:2.5px"><path d="M19 21v-2a4 4 0 0 0-4-4H9a4 4 0 0 0-4 4v2"/><circle cx="12" cy="7" r="4"/></svg>Robert Johnson</span><span class="ty" style="top:27.06px">Pension Fund</span><span class="sbadge" style="top:14.81px;background:#ffe2e2;color:#e7000b">Passed</span><span class="dbadge" style="top:14.81px"><svg class="ic" width="7.5" height="7.5" viewBox="0 0 24 24" fill="none" stroke="#1e5f96" stroke-width="2.2" stroke-linecap="round" stroke-linejoin="round" style=""><circle cx="12" cy="12" r="10"/><circle cx="12" cy="10" r="3"/><path d="M7 20.662V19a2 2 0 0 1 2-2h6a2 2 0 0 1 2 2v1.662"/></svg><span>Direct</span></span><span class="tg" style="top:15.56px">€25.0M</span><span class="eg" style="top:15.26px"><i style="background:#cad5e2"></i><b>20</b></span><span class="pb" style="top:15.56px;color:#5d6e8c">0%</span><span class="la" style="top:15.56px">8 Oct</span></div>
<div class="tr" style="top:461.325px;height:43.125px"><span class="cbx" style="top:15.46px"></span><span class="lpav" style="top:9.81px"><svg class="ic" width="10" height="10" viewBox="0 0 24 24" fill="none" stroke="#17568f" stroke-width="3" stroke-linecap="round" stroke-linejoin="round" style=""><path d="M10 12h4"/><path d="M10 8h4"/><path d="M14 21v-3a2 2 0 0 0-4 0v3"/><path d="M6 10H4a2 2 0 0 0-2 2v7a2 2 0 0 0 2 2h16a2 2 0 0 0 2-2V9a2 2 0 0 0-2-2h-2"/><path d="M6 21V5a2 2 0 0 1 2-2h8a2 2 0 0 1 2 2v16"/></svg></span><span class="nm" style="top:6.06px">GreenTech Family Office</span><span class="ct" style="top:17.06px"><svg class="ic" width="7.5" height="7.5" viewBox="0 0 24 24" fill="none" stroke="#64748b" stroke-width="2.4" stroke-linecap="round" stroke-linejoin="round" style="vertical-align:-1.6px;margin-right:2.5px"><path d="M19 21v-2a4 4 0 0 0-4-4H9a4 4 0 0 0-4 4v2"/><circle cx="12" cy="7" r="4"/></svg>Thomas Weber</span><span class="ty" style="top:27.06px">Family Office</span><span class="sbadge" style="top:14.81px;background:#def4f1;color:#00b39b">Committed</span><span class="dbadge" style="top:14.81px"><svg class="ic" width="7.5" height="7.5" viewBox="0 0 24 24" fill="none" stroke="#1e5f96" stroke-width="2.2" stroke-linecap="round" stroke-linejoin="round" style=""><circle cx="12" cy="12" r="10"/><circle cx="12" cy="10" r="3"/><path d="M7 20.662V19a2 2 0 0 1 2-2h6a2 2 0 0 1 2 2v1.662"/></svg><span>Direct</span></span><span class="tg" style="top:15.56px">€7.5M</span><span class="eg" style="top:15.26px"><i style="background:#00b39b"></i><b>98</b></span><span class="pb" style="top:15.56px;color:#0fb5a0">100%</span><span class="la" style="top:15.56px">18 Dec</span></div>
<div class="tr" style="top:504.450px;height:43.125px"><span class="cbx" style="top:15.46px"></span><span class="lpav" style="top:9.81px"><svg class="ic" width="10" height="10" viewBox="0 0 24 24" fill="none" stroke="#17568f" stroke-width="3" stroke-linecap="round" stroke-linejoin="round" style=""><path d="M10 12h4"/><path d="M10 8h4"/><path d="M14 21v-3a2 2 0 0 0-4 0v3"/><path d="M6 10H4a2 2 0 0 0-2 2v7a2 2 0 0 0 2 2h16a2 2 0 0 0 2-2V9a2 2 0 0 0-2-2h-2"/><path d="M6 21V5a2 2 0 0 1 2-2h8a2 2 0 0 1 2 2v16"/></svg></span><span class="nm" style="top:6.06px">European Pension Partners</span><span class="ct" style="top:17.06px"><svg class="ic" width="7.5" height="7.5" viewBox="0 0 24 24" fill="none" stroke="#64748b" stroke-width="2.4" stroke-linecap="round" stroke-linejoin="round" style="vertical-align:-1.6px;margin-right:2.5px"><path d="M19 21v-2a4 4 0 0 0-4-4H9a4 4 0 0 0-4 4v2"/><circle cx="12" cy="7" r="4"/></svg>Willem van der Berg</span><span class="ty" style="top:27.06px">Pension Fund</span><span class="sbadge" style="top:14.81px;background:#def4f1;color:#00b39b">Committed</span><span class="dbadge" style="top:14.81px"><svg class="ic" width="7.5" height="7.5" viewBox="0 0 24 24" fill="none" stroke="#1e5f96" stroke-width="2.2" stroke-linecap="round" stroke-linejoin="round" style=""><circle cx="12" cy="12" r="10"/><circle cx="12" cy="10" r="3"/><path d="M7 20.662V19a2 2 0 0 1 2-2h6a2 2 0 0 1 2 2v1.662"/></svg><span>Direct</span></span><span class="tg" style="top:15.56px">€20.0M</span><span class="eg" style="top:15.26px"><i style="background:#00b39b"></i><b>95</b></span><span class="pb" style="top:15.56px;color:#0fb5a0">100%</span><span class="la" style="top:15.56px">8 Dec</span></div>
<div class="tr" style="top:547.575px;height:43.125px"><span class="cbx" style="top:15.46px"></span><span class="lpav" style="top:9.81px"><svg class="ic" width="10" height="10" viewBox="0 0 24 24" fill="none" stroke="#17568f" stroke-width="3" stroke-linecap="round" stroke-linejoin="round" style=""><path d="M10 12h4"/><path d="M10 8h4"/><path d="M14 21v-3a2 2 0 0 0-4 0v3"/><path d="M6 10H4a2 2 0 0 0-2 2v7a2 2 0 0 0 2 2h16a2 2 0 0 0 2-2V9a2 2 0 0 0-2-2h-2"/><path d="M6 21V5a2 2 0 0 1 2-2h8a2 2 0 0 1 2 2v16"/></svg></span><span class="nm" style="top:6.06px">Nordic Climate Foundation</span><span class="ct" style="top:17.06px"><svg class="ic" width="7.5" height="7.5" viewBox="0 0 24 24" fill="none" stroke="#64748b" stroke-width="2.4" stroke-linecap="round" stroke-linejoin="round" style="vertical-align:-1.6px;margin-right:2.5px"><path d="M19 21v-2a4 4 0 0 0-4-4H9a4 4 0 0 0-4 4v2"/><circle cx="12" cy="7" r="4"/></svg>Astrid Johansson</span><span class="ty" style="top:27.06px">Foundation Endowment</span><span class="sbadge" style="top:14.81px;background:#def4f1;color:#00b39b">Committed</span><span class="dbadge" style="top:14.81px"><svg class="ic" width="7.5" height="7.5" viewBox="0 0 24 24" fill="none" stroke="#1e5f96" stroke-width="2.2" stroke-linecap="round" stroke-linejoin="round" style=""><circle cx="12" cy="12" r="10"/><circle cx="12" cy="10" r="3"/><path d="M7 20.662V19a2 2 0 0 1 2-2h6a2 2 0 0 1 2 2v1.662"/></svg><span>Direct</span></span><span class="tg" style="top:15.56px">€10.0M</span><span class="eg" style="top:15.26px"><i style="background:#00b39b"></i><b>100</b></span><span class="pb" style="top:15.56px;color:#0fb5a0">100%</span><span class="la" style="top:15.56px">25 Dec</span></div>
</section></main>
</body></html>
